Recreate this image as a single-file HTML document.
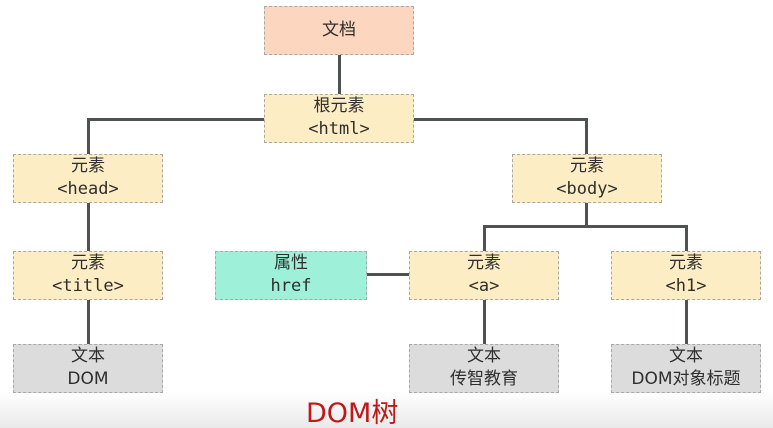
<!DOCTYPE html>
<html><head><meta charset="utf-8"><style>
html,body{margin:0;padding:0;width:773px;height:428px;overflow:hidden;background:#fff;position:relative;font-family:"DejaVu Sans Mono","Liberation Mono","Noto Sans CJK SC",monospace;}
.bg{position:absolute;left:0;top:392px;width:773px;height:36px;background:linear-gradient(#fff,#e9e9e9);}
.b{position:absolute;box-sizing:border-box;border:1px dashed #a8a8a8;background:#fdedc4;color:#2e2e2e;font-size:17px;line-height:23px;text-align:center;padding-top:0px;width:150px;height:49px;font-family:"DejaVu Sans Mono","Noto Sans CJK SC",monospace;}
.o{background:#fcd6be;}
.t{background:#9ef0d9;}
.g{background:#dcdcdc;font-family:"DejaVu Sans","Noto Sans CJK SC",sans-serif;}
.l{position:absolute;background:#4f5252;}
.title{position:absolute;left:306px;top:391px;color:#c01818;font-size:27px;font-family:"DejaVu Sans","Noto Sans CJK SC",sans-serif;}
</style></head><body>
<div class="bg"></div>
<div class="l" style="left:338px;top:55px;width:3px;height:39px"></div>
<div class="l" style="left:87px;top:118px;width:177px;height:3px"></div>
<div class="l" style="left:87px;top:118px;width:3px;height:36px"></div>
<div class="l" style="left:414px;top:118px;width:174px;height:3px"></div>
<div class="l" style="left:585px;top:118px;width:3px;height:36px"></div>
<div class="l" style="left:87px;top:203px;width:3px;height:48px"></div>
<div class="l" style="left:87px;top:300px;width:3px;height:44px"></div>
<div class="l" style="left:585px;top:203px;width:3px;height:24px"></div>
<div class="l" style="left:483px;top:225px;width:205px;height:3px"></div>
<div class="l" style="left:483px;top:225px;width:3px;height:26px"></div>
<div class="l" style="left:685px;top:225px;width:3px;height:26px"></div>
<div class="l" style="left:483px;top:300px;width:3px;height:44px"></div>
<div class="l" style="left:685px;top:300px;width:3px;height:44px"></div>
<div class="l" style="left:367px;top:273px;width:42px;height:3px"></div>
<div class="b o" style="left:264px;top:6px;line-height:46px;padding:0">文档</div>
<div class="b" style="left:264px;top:94px">根元素<br>&lt;html&gt;</div>
<div class="b" style="left:13px;top:154px">元素<br>&lt;head&gt;</div>
<div class="b" style="left:512px;top:154px">元素<br>&lt;body&gt;</div>
<div class="b" style="left:13px;top:251px">元素<br>&lt;title&gt;</div>
<div class="b t" style="left:215px;top:251px;width:152px">属性<br>href</div>
<div class="b" style="left:409px;top:251px">元素<br>&lt;a&gt;</div>
<div class="b" style="left:611px;top:251px">元素<br>&lt;h1&gt;</div>
<div class="b g" style="left:13px;top:344px">文本<br>DOM</div>
<div class="b g" style="left:409px;top:344px">文本<br>传智教育</div>
<div class="b g" style="left:611px;top:344px">文本<br>DOM对象标题</div>
<div class="title">DOM树</div>
</body></html>
